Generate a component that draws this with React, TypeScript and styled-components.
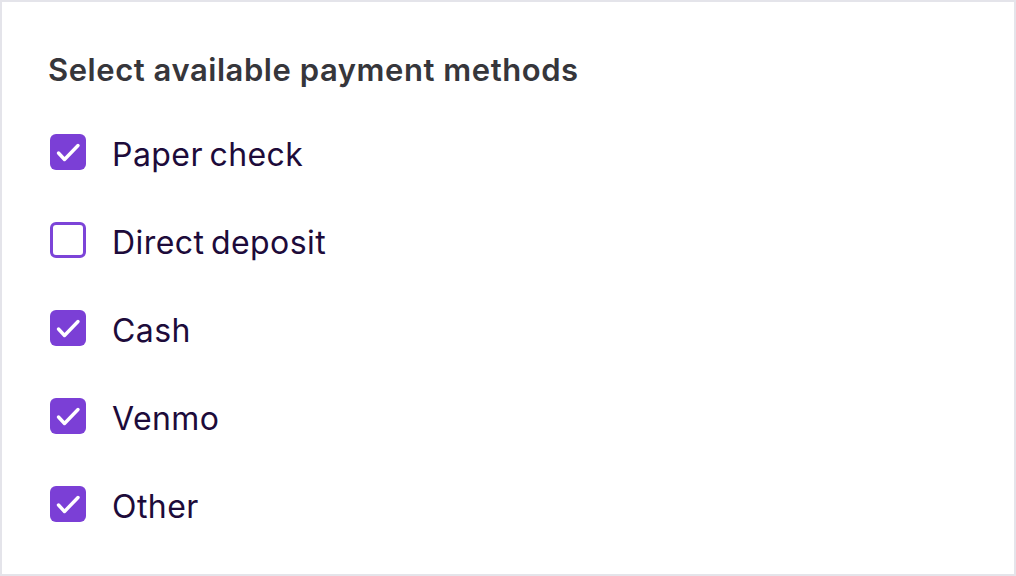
import React, { useState } from "react";
import styled, { createGlobalStyle } from "styled-components";

const Global = createGlobalStyle`
  html, body { margin: 0; padding: 0; background: #ffffff; }
  * { box-sizing: border-box; }
`;

const Frame = styled.div`
  width: 1016px;
  height: 576px;
  border: 2px solid #e4e4ea;
  background: #ffffff;
  padding: 49px 0 0 48px;
  display: flex;
  flex-direction: column;
`;

const Title = styled.h1`
  margin: 0 0 0 -2px;
  font-family: Inter, "Liberation Sans", sans-serif;
  font-weight: 600;
  font-size: 31px;
  line-height: 38px;
  color: #36363b;
  letter-spacing: 0.55px;
`;

const List = styled.div`
  margin-top: 45px;
  display: flex;
  flex-direction: column;
  gap: 52px;
`;

const Row = styled.label`
  display: flex;
  align-items: center;
  gap: 26px;
  height: 36px;
  cursor: pointer;
`;

const Box = styled.span<{ $checked: boolean }>`
  width: 36px;
  height: 36px;
  border-radius: 6px;
  display: flex;
  align-items: center;
  justify-content: center;
  flex-shrink: 0;
  background: ${(p) => (p.$checked ? "#7b3fd6" : "#ffffff")};
  border: ${(p) => (p.$checked ? "none" : "3px solid #7c44d8")};
`;

const Label = styled.span`
  font-family: Inter, "Liberation Sans", sans-serif;
  font-size: 32px;
  line-height: 36px;
  font-weight: 400;
  color: #1d0b3a;
  letter-spacing: 0.45px;
  word-spacing: -3px;
  padding-top: 5px;
`;

const items = [
  { label: "Paper check", checked: true },
  { label: "Direct deposit", checked: false },
  { label: "Cash", checked: true },
  { label: "Venmo", checked: true },
  { label: "Other", checked: true },
];

export default function App() {
  const [state, setState] = useState(items.map((i) => i.checked));
  return (
    <>
      <Global />
      <Frame>
        <Title>Select available payment methods</Title>
        <List>
          {items.map((it, i) => (
            <Row
              key={it.label}
              onClick={() => setState((s) => s.map((v, j) => (j === i ? !v : v)))}
            >
              <Box $checked={state[i]}>
                {state[i] && (
                  <svg width="36" height="36" viewBox="0 0 36 36" fill="none">
                    <path
                      d="M8.5 19 L14.5 25.5 L28 11.5"
                      stroke="#ffffff"
                      strokeWidth="3.4"
                      strokeLinecap="round"
                      strokeLinejoin="round"
                    />
                  </svg>
                )}
              </Box>
              <Label>{it.label}</Label>
            </Row>
          ))}
        </List>
      </Frame>
    </>
  );
}
